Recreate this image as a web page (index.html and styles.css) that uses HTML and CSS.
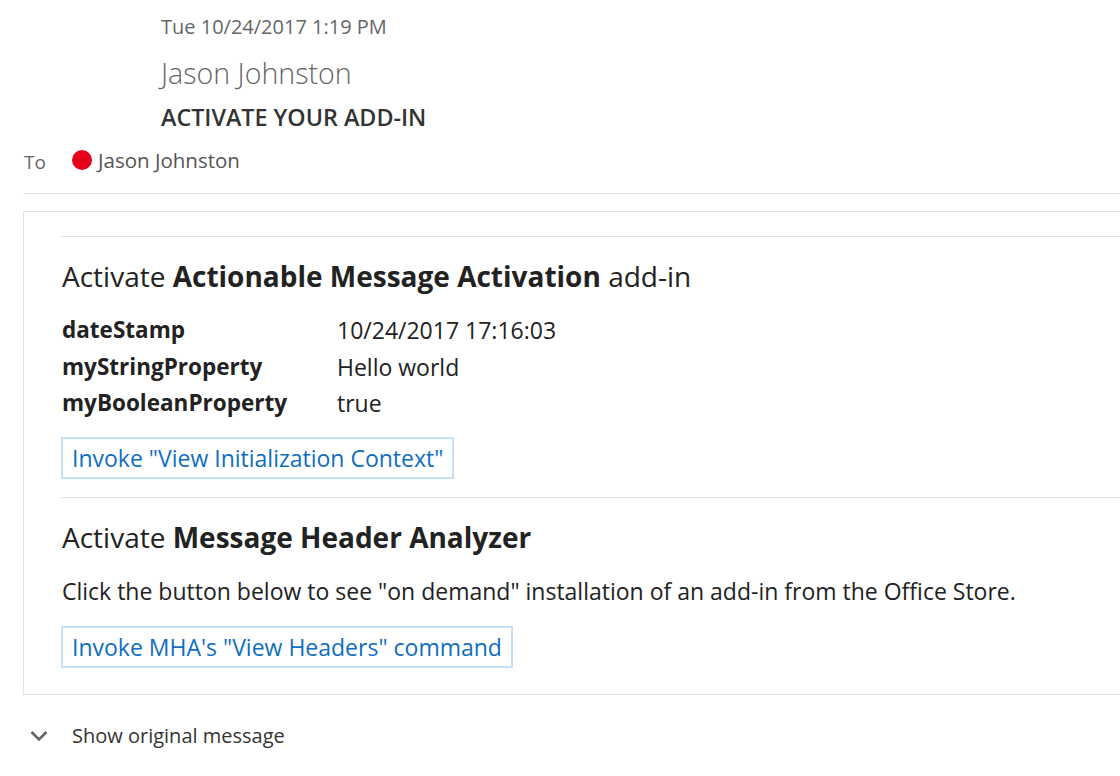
FILE: index.html
```html
<!DOCTYPE html>
<html>
<head>
<meta charset="utf-8">
<link rel="stylesheet" href="styles.css">
</head>
<body>
<div class="page">
  <div class="header">
    <div class="date">Tue 10/24/2017 1:19 PM</div>
    <div class="sender">Jason Johnston</div>
    <div class="subject">ACTIVATE YOUR ADD-IN</div>
  </div>
  <div class="to-row">
    <span class="to-label">To</span>
    <span class="dot"></span>
    <span class="recipient">Jason Johnston</span>
  </div>
  <div class="rule"></div>
  <div class="card">
    <div class="card-inner">
      <div class="section first">
        <div class="title">Activate <b>Actionable Message Activation</b> add-in</div>
        <div class="facts">
          <div class="fact-name">dateStamp</div><div class="fact-value">10/24/2017 17:16:03</div>
          <div class="fact-name">myStringProperty</div><div class="fact-value">Hello world</div>
          <div class="fact-name">myBooleanProperty</div><div class="fact-value">true</div>
        </div>
        <div class="action">Invoke "View Initialization Context"</div>
      </div>
      <div class="section second">
        <div class="title">Activate <b>Message Header Analyzer</b></div>
        <div class="text">Click the button below to see "on demand" installation of an add-in from the Office Store.</div>
        <div class="action">Invoke MHA's "View Headers" command</div>
      </div>
    </div>
  </div>
  <div class="footer">
    <svg class="chev" width="18" height="12" viewBox="0 0 18 12"><path d="M1.5 2 L9 9.5 L16.5 2" fill="none" stroke="#666" stroke-width="2.6"/></svg>
    <span class="show">Show original message</span>
  </div>
</div>
</body>
</html>
```
FILE: styles.css
```css
html, body { margin: 0; padding: 0; background: #fff; }
body { font-family: "Open Sans", "Noto Sans", sans-serif; overflow: hidden; width: 1120px; height: 776px; }
.page { padding-top: 13px; }
.header { padding-left: 161px; }
.date { font-size: 20px; color: #666; line-height: 28px; }
.sender { font-size: 28.6px; font-weight: 300; color: #666; line-height: 34px; margin-top: 15px; }
.subject { font-size: 23.3px; font-weight: 600; color: #333; line-height: 28px; margin-top: 13px; }
.to-row { display: flex; align-items: center; padding-left: 24px; margin-top: 14px; height: 30px; }
.to-label { font-size: 19px; color: #666; width: 48px; margin-top: 3px; }
.dot { width: 20px; height: 20px; border-radius: 50%; background: #e3001b; margin-right: 6px; }
.recipient { font-size: 20.5px; color: #555; }
.rule { height: 1px; background: #e3e3e3; margin-left: 23px; margin-top: 18px; }
.card { margin-left: 23px; margin-top: 17px; border: 1px solid #e3e3e3; border-right: none; }
.card-inner { padding-left: 37px; padding-top: 24px; padding-bottom: 26px; }
.section { border-top: 1px solid #e3e3e3; padding-left: 1px; padding-top: 21px; }
.section.first { padding-bottom: 18px; }
.title { font-size: 28px; color: #222; line-height: 36px; }
.title b { font-weight: 700; }
.facts { display: grid; grid-template-columns: 275px auto; margin-top: 18px; }
.fact-name { font-weight: 700; font-size: 22.5px; color: #222; line-height: 36.5px; }
.fact-value { font-size: 23px; color: #222; line-height: 36.5px; }
.text { font-size: 23px; color: #222; line-height: 32px; margin-top: 20px; }
.action { display: inline-block; margin-top: 15px; margin-left: -1px; border: 2px solid #c7e0f4; color: #106ebe; font-size: 23px; line-height: 38px; padding: 0 9px 0 9px; }
.second .action { margin-top: 19px; }
.footer { display: flex; align-items: center; margin-top: 26px; height: 30px; padding-left: 30px; }
.chev { margin-right: 24px; }
.show { font-size: 20px; color: #333; }
```
